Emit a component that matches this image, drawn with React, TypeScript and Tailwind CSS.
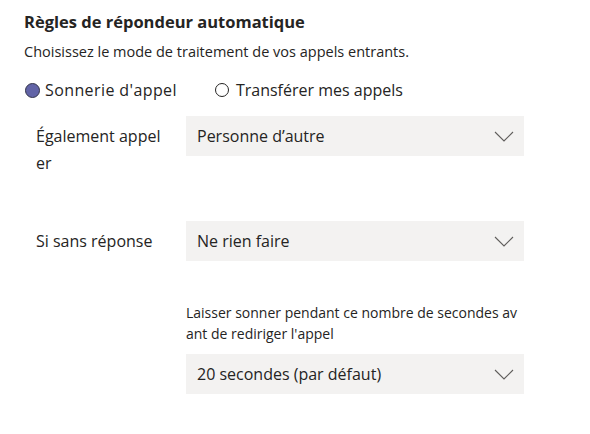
import React from "react";

function Chevron() {
  return (
    <svg width="20" height="11" viewBox="0 0 20 11" className="mt-[1px] shrink-0">
      <path d="M1 1 L10 10 L19 1" fill="none" stroke="#605e5c" strokeWidth="1.1" />
    </svg>
  );
}

function Dropdown({ value }: { value: string }) {
  return (
    <div className="flex h-10 w-[338px] items-center justify-between bg-[#f3f2f1] pl-[11px] pr-[10px]">
      <span className="text-[16px] text-[#252423]">{value}</span>
      <Chevron />
    </div>
  );
}

export default function App() {
  return (
    <div className="h-[434px] w-[590px] bg-white pl-6 pt-[12px] font-['Open_Sans',sans-serif] text-[#252423]">
      <div className="text-[16.5px] font-bold leading-5">Règles de répondeur automatique</div>
      <div className="mt-[10px] text-[14.5px] leading-5">Choisissez le mode de traitement de vos appels entrants.</div>
      <div className="mt-[16px] flex items-center text-[16px] leading-6">
        <div className="flex items-center">
          <span className="ml-[1px] mr-[5px] h-[15px] w-[15px] rounded-full border border-[#33344a] bg-[#6264a7]" />
          <span className="tracking-[0.4px]">Sonnerie d'appel</span>
        </div>
        <div className="ml-[38px] flex items-center">
          <span className="mr-[7px] h-[14px] w-[14px] rounded-full border border-[#252423] bg-white" />
          <span>Transférer mes appels</span>
        </div>
      </div>
      <div className="mt-[14px] grid grid-cols-[150px_338px] items-start pl-3">
        <div className="w-[130px] break-all pt-[7px] text-[16px] leading-[27px]">Également appeler</div>
        <Dropdown value="Personne d’autre" />
        <div className="mt-[44px] break-all pt-[7px] text-[16px] leading-[27px]">Si sans réponse</div>
        <div className="mt-[44px]">
          <Dropdown value="Ne rien faire" />
        </div>
        <div />
        <div className="mt-[41px] break-all text-[14px] leading-[21px]">
          Laisser sonner pendant ce nombre de secondes avant de rediriger l'appel
        </div>
        <div />
        <div className="mt-[10px]">
          <Dropdown value="20 secondes (par défaut)" />
        </div>
      </div>
    </div>
  );
}
